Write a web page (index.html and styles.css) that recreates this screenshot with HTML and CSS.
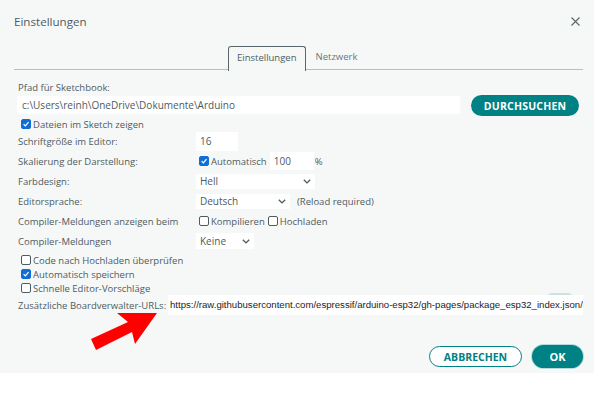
FILE: index.html
```html
<!DOCTYPE html>
<html lang="de">
<head>
<meta charset="utf-8">
<title>Einstellungen</title>
<link rel="stylesheet" href="styles.css">
</head>
<body>
<div class="dialog">
  <div class="header">
    <span class="title">Einstellungen</span>
    <svg class="close" width="9" height="9" viewBox="0 0 9 9"><path d="M0.5 0.5L8.5 8.5M8.5 0.5L0.5 8.5" stroke="#5b666b" stroke-width="1.1" fill="none"/></svg>
  </div>
  <div class="tabs">
    <div class="tab active">Einstellungen</div>
    <div class="tab">Netzwerk</div>
  </div>
  <div class="content">
    <div class="label-top">Pfad für Sketchbook:</div>
    <div class="path-row">
      <div class="input path">c:\Users\reinh\OneDrive\Dokumente\Arduino</div>
      <button class="btn primary browse">DURCHSUCHEN</button>
    </div>
    <div class="check-row"><span class="cb checked"><svg viewBox="0 0 10 10"><path d="M2 5.2L4.2 7.3L8.2 2.6" stroke="#fff" stroke-width="1.6" fill="none"/></svg></span>Dateien im Sketch zeigen</div>
    <div class="grid">
      <div class="lbl">Schriftgröße im Editor:</div>
      <div class="ctl"><div class="input small">16</div></div>

      <div class="lbl">Skalierung der Darstellung:</div>
      <div class="ctl"><span class="cb checked"><svg viewBox="0 0 10 10"><path d="M2 5.2L4.2 7.3L8.2 2.6" stroke="#fff" stroke-width="1.6" fill="none"/></svg></span><span class="opt">Automatisch</span><div class="input scale">100</div><span class="pct">%</span></div>

      <div class="lbl">Farbdesign:</div>
      <div class="ctl"><div class="select w-theme">Hell<svg class="chev" viewBox="0 0 8 5"><path d="M0.8 0.8L4 3.9L7.2 0.8" stroke="#4e5b61" stroke-width="1.4" fill="none"/></svg></div></div>

      <div class="lbl">Editorsprache:</div>
      <div class="ctl"><div class="select w-lang">Deutsch<svg class="chev" viewBox="0 0 8 5"><path d="M0.8 0.8L4 3.9L7.2 0.8" stroke="#4e5b61" stroke-width="1.4" fill="none"/></svg></div><span class="note">(Reload required)</span></div>

      <div class="lbl">Compiler-Meldungen anzeigen beim</div>
      <div class="ctl"><span class="cb"></span><span class="opt">Kompilieren</span><span class="cb"></span><span class="opt">Hochladen</span></div>

      <div class="lbl">Compiler-Meldungen</div>
      <div class="ctl"><div class="select w-warn">Keine<svg class="chev" viewBox="0 0 8 5"><path d="M0.8 0.8L4 3.9L7.2 0.8" stroke="#4e5b61" stroke-width="1.4" fill="none"/></svg></div></div>
    </div>
    <div class="checks">
      <div class="check-row"><span class="cb"></span>Code nach Hochladen überprüfen</div>
      <div class="check-row"><span class="cb checked"><svg viewBox="0 0 10 10"><path d="M2 5.2L4.2 7.3L8.2 2.6" stroke="#fff" stroke-width="1.6" fill="none"/></svg></span>Automatisch speichern</div>
      <div class="check-row"><span class="cb"></span>Schnelle Editor-Vorschläge</div>
    </div>
    <div class="url-row">
      <span class="url-label">Zusätzliche Boardverwalter-URLs:</span>
      <div class="url-wrap">
        <span class="edit-peek"></span>
        <div class="input url">https://raw.githubusercontent.com/espressif/arduino-esp32/gh-pages/package_esp32_index.json/</div>
      </div>
    </div>
    <div class="footer">
      <button class="btn secondary">ABBRECHEN</button>
      <button class="btn primary ok">OK</button>
    </div>
  </div>
  <svg class="arrow" width="594" height="393" viewBox="0 0 594 393"><polygon points="91,339 128,322 117,313 157,313 135,344 132,332 96,350" fill="#ff0000"/></svg>
</div>
</body>
</html>
```

FILE: styles.css
```css
* { box-sizing: border-box; }
html, body { margin: 0; padding: 0; background: #ffffff; }
body {
  font-family: "Open Sans", "Noto Sans", sans-serif;
  color: #4e5b61;
  font-size: 9.5px;
  width: 594px;
  height: 393px;
  overflow: hidden;
}
.dialog {
  position: relative;
  width: 594px;
  height: 373px;
  background: #f6f8f8;
}
.header {
  height: 44px;
  display: flex;
  align-items: center;
  justify-content: space-between;
  padding: 0 14px 2px 14px;
}
.title { font-size: 11.6px; color: #4e5b61; }
.close { width: 9px; height: 9px; margin-right: 0; }
.tabs {
  margin: 2px 11px 0 14px;
  height: 24px;
  display: flex;
  align-items: flex-end;
  padding-left: 214px;
  border-bottom: 1.5px solid #b8bdbe;
}
.tab {
  height: 23px;
  line-height: 22px;
  padding: 0 10px;
  font-size: 9.5px;
  color: #6c7679;
}
.tab.active {
  color: #4e5b61;
  border: 1px solid #5b666b;
  border-bottom: none;
  border-radius: 3px 3px 0 0;
  background: #f6f8f8;
  margin-bottom: -1.5px;
  height: 24.5px;
  padding: 0 8px;
}
.content {
  padding: 10px 11px 0 18px;
  display: flex;
  flex-direction: column;
}
.label-top { height: 16px; line-height: 16px; }
.path-row {
  height: 21px;
  display: flex;
  align-items: flex-start;
  gap: 11px;
  margin-left: -1px;
}
.input {
  background: #ffffff;
  color: #4e5b61;
  height: 18px;
  line-height: 18px;
  padding: 0 5px;
  white-space: nowrap;
  overflow: hidden;
}
.path { width: 443px; font-size: 10px; }
.btn {
  font-family: "Open Sans", sans-serif;
  font-weight: 700;
  font-size: 10.5px;
  border-radius: 12px;
  cursor: pointer;
  padding: 0;
}
.primary { background: #008184; color: #fff; border: none; }
.browse { width: 108px; height: 21px; margin-top: -1px; letter-spacing: 0.2px; }
.check-row {
  height: 14px;
  display: flex;
  align-items: center;
  padding-left: 3px;
  white-space: nowrap;
}
.cb {
  width: 10px;
  height: 10px;
  border: 1px solid #4e5b61;
  border-radius: 2px;
  margin-right: 2px;
  background: #fff;
  display: inline-flex;
  flex: none;
}
.cb.checked { background: #0f6fd6; border-color: #0f6fd6; }
.cb svg { width: 100%; height: 100%; }
.grid {
  display: grid;
  grid-template-columns: 178px 1fr;
  grid-auto-rows: 20px;
}
.lbl { display: flex; align-items: center; white-space: nowrap; }
.ctl { display: flex; align-items: center; white-space: nowrap; }
.small { width: 42px; height: 19px; line-height: 19px; padding-left: 4px; font-size: 10px; }
.ctl > .cb:first-child { margin-left: 3px; }
.opt { margin-right: 3px; }
.scale { width: 44px; height: 18px; padding-left: 4px; font-size: 10px; }
.pct { margin-left: 1px; }
.select {
  background: #fff;
  height: 15px;
  line-height: 15px;
  padding: 0 4px;
  display: flex;
  align-items: center;
  justify-content: space-between;
  font-size: 10px;
}
.chev { width: 8px; height: 5px; }
.w-theme { width: 119px; }
.w-lang { width: 94px; }
.w-warn { width: 58px; height: 16px; }
.note { margin-left: 7px; }
.checks { margin-top: 2px; }
.url-row {
  height: 20px;
  display: flex;
  align-items: center;
}
.url-label { width: 150px; flex: none; white-space: nowrap; }
.url-wrap { position: relative; flex: 1; }
.url {
  position: relative;
  width: 415px;
  height: 20px;
  line-height: 20px;
  padding-left: 2px;
  font-family: "Liberation Sans", Arial, sans-serif;
  font-size: 9.6px;
  color: #1d1d1d;
}
.edit-peek {
  position: absolute;
  left: 379px;
  top: -2px;
  width: 26px;
  height: 10px;
  border-radius: 5px;
  background: #c9e3e3;
}
.footer {
  margin-top: 30px;
  height: 23px;
  display: flex;
  justify-content: flex-end;
  align-items: center;
  gap: 10px;
}
.secondary {
  width: 93px;
  height: 21px;
  background: #ffffff;
  color: #008184;
  border: 1.5px solid #008184;
}
.ok {
  width: 51px;
  height: 23px;
  box-shadow: 0 0 0 1px rgba(0,129,132,0.25);
  font-size: 11px;
}
.arrow { position: absolute; left: 0; top: 0; pointer-events: none; }
```
